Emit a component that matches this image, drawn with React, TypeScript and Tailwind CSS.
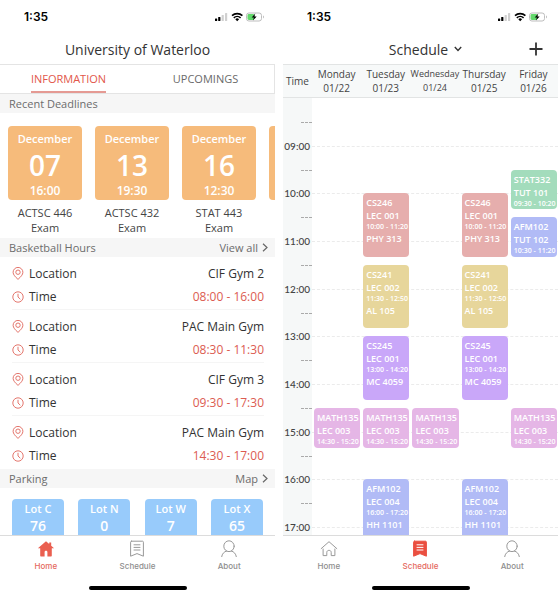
import { useState, type CSSProperties, type ReactNode } from "react";

type IconProps = { active: boolean };

const deadlines = [
  { month: "December", day: "07", time: "16:00", course: "ACTSC 446" },
  { month: "December", day: "13", time: "19:30", course: "ACTSC 432" },
  { month: "December", day: "16", time: "12:30", course: "STAT 443" },
  { month: "", day: "", time: "", course: "" },
];

const gyms = [
  { place: "CIF Gym 2", hours: "08:00 - 16:00" },
  { place: "PAC Main Gym", hours: "08:30 - 11:30" },
  { place: "CIF Gym 3", hours: "09:30 - 17:30" },
  { place: "PAC Main Gym", hours: "14:30 - 17:00" },
];

const lots = [
  { name: "Lot C", free: 76 },
  { name: "Lot N", free: 0 },
  { name: "Lot W", free: 7 },
  { name: "Lot X", free: 65 },
];

const days = [
  ["Monday", "01/22"],
  ["Tuesday", "01/23"],
  ["Wednesday", "01/24"],
  ["Thursday", "01/25"],
  ["Friday", "01/26"],
];

const courses = [
  { code: "CS246", section: "LEC 001", start: "10:00", end: "11:20", room: "PHY 313", days: [1, 3], color: "bg-[#e6aead]" },
  { code: "CS241", section: "LEC 002", start: "11:30", end: "12:50", room: "AL 105", days: [1, 3], color: "bg-[#e7d69b]" },
  { code: "CS245", section: "LEC 001", start: "13:00", end: "14:20", room: "MC 4059", days: [1, 3], color: "bg-[#c9a7f9]" },
  { code: "MATH135", section: "LEC 003", start: "14:30", end: "15:20", room: "", days: [0, 1, 2, 4], color: "bg-[#e5b6e6]" },
  { code: "AFM102", section: "LEC 004", start: "16:00", end: "17:20", room: "HH 1101", days: [1, 3], color: "bg-[#b1bbf6]" },
  { code: "STAT332", section: "TUT 101", start: "09:30", end: "10:20", room: "", days: [4], color: "bg-[#a3dcbc]" },
  { code: "AFM102", section: "TUT 102", start: "10:30", end: "11:20", room: "", days: [4], color: "bg-[#b1bbf6]" },
];

const hours = [9, 10, 11, 12, 13, 14, 15, 16, 17];
const halves = [8, 9, 10, 11, 12, 13, 14, 15, 16];
const LAST_LINE = 56;

// One grid row stands for ten minutes, counted from 08:00.
function lineAt(time: string) {
  const [h, m] = time.split(":").map(Number);
  return Math.min(1 + (h - 8) * 6 + m / 10, LAST_LINE);
}

function StatusBar() {
  return (
    <div className="flex h-[34px] shrink-0 items-center justify-between pl-6 pr-[10px]">
      <span className="font-['Inter',sans-serif] text-[12px] font-semibold text-black">1:35</span>
      <svg viewBox="0 0 50 12" className="h-3 w-[50px]" aria-hidden="true">
        <rect x="0" y="7.5" width="2.2" height="2.5" rx=".5" />
        <rect x="3.2" y="6" width="2.2" height="4" rx=".5" />
        <rect x="6.6" y="4" width="2.2" height="6" rx=".5" fill="#d0d0d0" />
        <rect x="10" y="2" width="2.2" height="8" rx=".5" fill="#d0d0d0" />
        <path d="M17 4.7a7.6 7.6 0 0 1 10.4 0M18.8 6.8a5 5 0 0 1 6.8 0" fill="none" stroke="#000" strokeWidth="1.6" />
        <path d="M20.3 8.2a2.8 2.8 0 0 1 3.8 0l-1.9 2z" />
        <rect x="31.5" y="2" width="15" height="8" rx="2.4" fill="#fff" stroke="#b5b5b5" strokeWidth=".9" />
        <rect x="32.5" y="3" width="6.8" height="6" rx="1.4" fill="#62d86b" />
        <path d="M48 4.6v2.8c1.2-.4 1.2-2.4 0-2.8z" fill="#b5b5b5" />
        <path d="M40.3 2.6l-3.6 4h2.2l-1 3 3.8-4.2h-2.3z" />
      </svg>
    </div>
  );
}

function HomeIcon({ active }: IconProps) {
  return active ? (
    <svg viewBox="0 0 18 18" className="h-[18px] w-[18px]" aria-hidden="true">
      <path d="M9 1.2.9 8.3h2.3v7.2c0 .6.4 1 1 1h3.4v-4.4c0-1.7 2.8-1.7 2.8 0v4.4h3.4c.6 0 1-.4 1-1V8.3h2.3l-2.9-2.6V2.6h-2v1.3z" fill="#ea5f50" />
    </svg>
  ) : (
    <svg viewBox="0 0 18 18" className="h-[18px] w-[18px]" fill="none" stroke="#999" strokeLinejoin="round" strokeLinecap="round" aria-hidden="true">
      <path d="M1.2 8.6 9 1.7l7.8 6.9M3.1 9v6.6h3.7v-3.3c0-2.6 4.4-2.6 4.4 0v3.3h3.7V9" />
    </svg>
  );
}

function ScheduleIcon({ active }: IconProps) {
  return (
    <svg viewBox="0 0 18 18" className="h-[18px] w-[18px]" strokeLinecap="round" strokeLinejoin="round" aria-hidden="true">
      <path d="M3.4 1.2h11.2a1 1 0 0 1 .8 1v14L9 13.6l-6.4 2.6v-14a1 1 0 0 1 .8-1z" fill={active ? "#ea4f40" : "none"} stroke={active ? "#ea4f40" : "#999"} />
      <path d="M6 4.8h6M6 7.4h6M6 10h6" stroke={active ? "#fff" : "#999"} fill="none" />
    </svg>
  );
}

function AboutIcon() {
  return (
    <svg viewBox="0 0 18 18" className="h-[18px] w-[18px]" fill="none" stroke="#999" strokeLinecap="round" aria-hidden="true">
      <ellipse cx="9" cy="6.2" rx="5.2" ry="5.4" />
      <path d="M6.6 11c-2.6.7-4.5 2.8-4.9 5.6M11.4 11c2.6.7 4.5 2.8 4.9 5.6" />
    </svg>
  );
}

function TabBar({ current }: { current: "Home" | "Schedule" }) {
  const items: { name: string; icon: ReactNode }[] = [
    { name: "Home", icon: <HomeIcon active={current === "Home"} /> },
    { name: "Schedule", icon: <ScheduleIcon active={current === "Schedule"} /> },
    { name: "About", icon: <AboutIcon /> },
  ];
  return (
    <footer className="flex h-[61px] shrink-0 flex-col items-center justify-between border-t border-[#dcdcdc] bg-white pb-[6px] pt-1">
      <nav className="grid w-full grid-cols-3">
        {items.map((item) => (
          <a
            key={item.name}
            href={"#" + item.name.toLowerCase()}
            className={
              "flex flex-col items-center gap-[3px] font-['Inter',sans-serif] text-[8px] leading-[10px] font-medium " +
              (item.name === current ? "text-[#e5695e]" : "text-[#8e8e8e]")
            }
          >
            {item.icon}
            {item.name}
          </a>
        ))}
      </nav>
      <div className="h-1 w-[98px] rounded-full bg-black" />
    </footer>
  );
}

function Chevron() {
  return (
    <svg viewBox="0 0 6 9" className="h-[9px] w-[6px]" fill="none" stroke="#666" strokeWidth="1.2" aria-hidden="true">
      <path d="M1 .7 5 4.5 1 8.3" />
    </svg>
  );
}

function SectionHeader({ title, link }: { title: string; link?: string }) {
  return (
    <div className="flex h-[19px] items-center justify-between bg-[#f6f6f6] pl-[9px] pr-[7px] text-[11px] leading-[18px] text-[#6c6c6c]">
      <h2>{title}</h2>
      {link && (
        <a href="#more" className="flex items-center gap-1">
          {link}
          <Chevron />
        </a>
      )}
    </div>
  );
}

function PinIcon() {
  return (
    <svg viewBox="0 0 12 13" className="h-[13px] w-3" fill="none" stroke="#e0665c" strokeWidth=".9" aria-hidden="true">
      <path d="M6 12.4C3.2 9.8 1.1 7.6 1.1 5.3a4.9 4.9 0 0 1 9.8 0c0 2.3-2.1 4.5-4.9 7.1z" />
      <circle cx="6" cy="5.2" r="2.2" />
    </svg>
  );
}

function ClockIcon() {
  return (
    <svg viewBox="0 0 12 12" className="h-3 w-3" fill="none" stroke="#e0665c" strokeWidth=".9" aria-hidden="true">
      <circle cx="6" cy="6" r="5.2" />
      <path d="M6 2.8V6l2.3 2.2" />
    </svg>
  );
}

function HomeScreen() {
  const [tab, setTab] = useState("INFORMATION");
  return (
    <section className="flex min-w-0 flex-1 flex-col">
      <StatusBar />
      <h1 className="flex h-[30px] shrink-0 items-center justify-center text-[14px] font-medium text-[#333]">University of Waterloo</h1>
      <div className="grid h-[30px] shrink-0 grid-cols-2 border-y border-r border-[#e4e4e4] text-[11px]">
        {["INFORMATION", "UPCOMINGS"].map((name) => (
          <button
            key={name}
            type="button"
            onClick={() => setTab(name)}
            className={
              "justify-self-center border-b-2 pt-[2px] " +
              (tab === name ? "border-[#e59a93] text-[#e2574b]" : "border-transparent text-[#6a6a6a]")
            }
          >
            {name}
          </button>
        ))}
      </div>
      <main className="min-h-0 flex-1 overflow-hidden">
        <SectionHeader title="Recent Deadlines" />
        <ul className="flex gap-[13px] overflow-hidden px-2 pb-[3px] pt-[13px]">
          {deadlines.map((d, i) => (
            <li key={i} className="w-[74px] shrink-0 text-center text-[11px] leading-[15px] text-[#444]">
              <div className="mb-[5px] flex h-[74px] flex-col items-center justify-between rounded-[4px] bg-[#f6bb7b] pb-px pt-[5px] text-[11px] leading-[16px] font-semibold text-white">
                <span>{d.month}</span>
                <span className="text-[28px] leading-[28px]">{d.day}</span>
                <span className="text-[12px]">{d.time}</span>
              </div>
              {d.course && (
                <p>
                  {d.course}
                  <br />
                  Exam
                </p>
              )}
            </li>
          ))}
        </ul>
        <SectionHeader title="Basketball Hours" link="View all" />
        <ul className="pl-3 pr-[11px] text-[12px] leading-[16px] text-[#333]">
          {gyms.map((g, i) => (
            <li key={i} className="flex h-[53px] flex-col justify-center gap-[7px] border-b border-[#f5f5f5] pt-1 last:border-transparent">
              <div className="flex items-center gap-[5px]">
                <PinIcon />
                <span>Location</span>
                <span className="ml-auto">{g.place}</span>
              </div>
              <div className="flex items-center gap-[5px]">
                <ClockIcon />
                <span>Time</span>
                <span className="ml-auto text-[#dc5c51]">{g.hours}</span>
              </div>
            </li>
          ))}
        </ul>
        <SectionHeader title="Parking" link="Map" />
        <ul className="flex justify-between px-3 pt-[11px]">
          {lots.map((lot) => (
            <li key={lot.name} className="flex h-[52px] w-[52px] flex-col items-center rounded-[4px] bg-[#98cbfb] pt-[2px] text-[11px] leading-[16px] font-semibold text-white">
              <span>{lot.name}</span>
              <span className="text-[14px] leading-[18px]">{lot.free}</span>
            </li>
          ))}
        </ul>
      </main>
      <TabBar current="Home" />
    </section>
  );
}

function ScheduleScreen() {
  return (
    <section className="flex min-w-0 flex-1 flex-col">
      <StatusBar />
      <div className="grid h-[30px] shrink-0 grid-cols-[1fr_auto_1fr] items-center pl-[10px]">
        <button type="button" className="col-start-2 flex items-center gap-[6px] text-[14px] font-medium text-[#333]">
          Schedule
          <svg viewBox="0 0 8 6" className="h-[6px] w-2" fill="none" stroke="#333" strokeWidth="1.4" aria-hidden="true">
            <path d="M.8 1 4 4.4 7.2 1" />
          </svg>
        </button>
        <button type="button" aria-label="Add course" className="mr-[15px] justify-self-end">
          <svg viewBox="0 0 14 14" className="h-[14px] w-[14px]" stroke="#333" strokeWidth="1.8" aria-hidden="true">
            <path d="M7 .5v13M.5 7h13" />
          </svg>
        </button>
      </div>
      <div className="grid h-[34px] shrink-0 grid-cols-[29px_repeat(5,minmax(0,1fr))] items-center border-y border-[#e2e4e4] bg-[#f7f9f9] text-center text-[10px] leading-[14px] text-[#444]">
        <span>Time</span>
        {days.map(([day, date]) => (
          <span key={day} className={day === "Wednesday" ? "text-[9px]" : ""}>
            {day}
            <br />
            {date}
          </span>
        ))}
      </div>
      <main className="grid min-h-0 flex-1 grid-cols-[29px_repeat(5,minmax(0,1fr))] grid-rows-[repeat(55,minmax(0,1fr))] overflow-hidden">
        <div className="col-start-1 row-start-1 row-end-[-1] bg-[#f6f8f8]" />
        {halves.map((h) => (
          <i key={h} className="col-start-1 w-[11px] justify-self-end border-t border-dashed border-[#aaa]" style={{ gridRow: lineAt(h + ":30") }} />
        ))}
        {hours.map((h) => {
          const line = lineAt(h + ":00");
          const label: CSSProperties = { gridRow: `${line - 1} / ${line + 1}` };
          return (
            <span key={h} className="col-start-1 self-center justify-self-end pr-[2px] font-['Lato',sans-serif] text-[10px] leading-[12px] font-medium text-[#444]" style={label}>
              {String(h).padStart(2, "0")}:00
            </span>
          );
        })}
        {hours.map((h) => (
          <i key={h} className="col-start-2 col-end-7 border-t border-dashed border-[#ebebeb]" style={{ gridRow: lineAt(h + ":00") }} />
        ))}
        {courses.flatMap((c) =>
          c.days.map((day) => (
            <article
              key={c.code + c.start + day}
              className={
                "ml-[2px] mr-px overflow-hidden whitespace-nowrap pl-[3px] pt-[3px] text-[9px] leading-[13px] font-semibold text-white " +
                (lineAt(c.end) === LAST_LINE ? "rounded-t-[4px] " : "rounded-[4px] ") +
                c.color
              }
              style={{ gridColumn: day + 2, gridRow: `${lineAt(c.start)} / ${lineAt(c.end)}` }}
            >
              <h3>{c.code}</h3>
              <p>{c.section}</p>
              <p className="text-[7px] leading-[10px]">
                {c.start} - {c.end}
              </p>
              {c.room && <p>{c.room}</p>}
            </article>
          )),
        )}
      </main>
      <TabBar current="Schedule" />
    </section>
  );
}

export default function App() {
  return (
    <div className="flex h-screen gap-2 bg-white font-['Open_Sans',sans-serif]">
      <HomeScreen />
      <ScheduleScreen />
    </div>
  );
}
